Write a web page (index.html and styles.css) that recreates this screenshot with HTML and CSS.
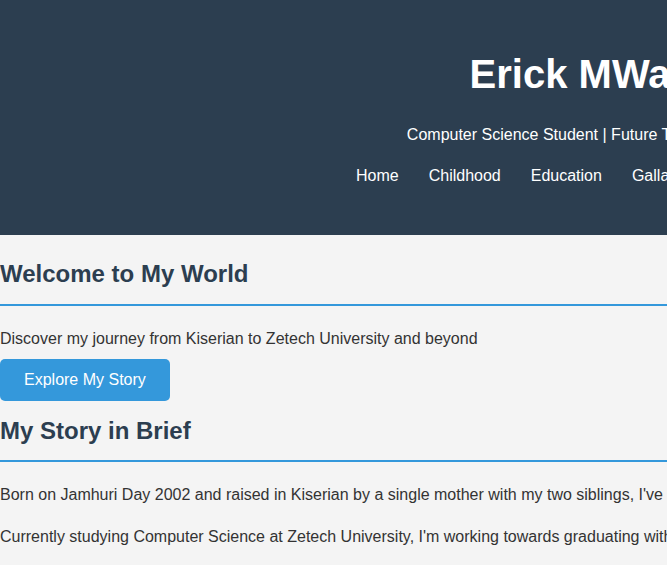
FILE: index.html
```html
<!DOCTYPE html>
<html lang="en">
<head>
<meta charset="utf-8">
<title>Erick MWangi</title>
<link rel="stylesheet" href="styles.css">
</head>
<body>
<div class="page">
  <header class="site-header">
    <h1 class="site-title">Erick MWangi</h1>
    <p class="tagline">Computer Science Student | Future Tech Entrepreneur</p>
    <nav class="site-nav">
      <a href="#">Home</a>
      <a href="#">Childhood</a>
      <a href="#">Education</a>
      <a href="#">Gallary</a>
      <a href="#">Future</a>
      <a href="#">Contact</a>
    </nav>
  </header>
  <main class="content">
    <section class="intro">
      <h2 class="section-title">Welcome to My World</h2>
      <p class="intro-text">Discover my journey from Kiserian to Zetech University and beyond</p>
      <a class="btn" href="#">Explore My Story</a>
    </section>
    <section class="brief">
      <h2 class="section-title">My Story in Brief</h2>
      <p>Born on Jamhuri Day 2002 and raised in Kiserian by a single mother with my two siblings, I've learned the value of resilience, hard work and family.</p>
      <p>Currently studying Computer Science at Zetech University, I'm working towards graduating with honours and building a career in technology.</p>
    </section>
  </main>
</div>
</body>
</html>
```
FILE: styles.css
```css
html, body {
  margin: 0;
  padding: 0;
}
body {
  background: #f4f4f4;
  color: #333333;
  font-family: "Liberation Sans", Arial, sans-serif;
  font-size: 16px;
  line-height: 1.6;
}
.page {
  width: 1200px;
}
.site-header {
  background: #2c3e50;
  color: #ffffff;
  text-align: center;
  padding: 42px 0 47px;
}
.site-title {
  margin: 0 0 16px;
  font-size: 40px;
  font-weight: bold;
}
.tagline {
  margin: 0 0 15px;
}
.site-nav {
  display: flex;
  justify-content: center;
  gap: 30px;
}
.site-nav a {
  color: #ffffff;
  text-decoration: none;
}
.content {
  padding-top: 20px;
}
.section-title {
  margin: 0 0 20px;
  font-size: 24px;
  color: #2c3e50;
  padding-bottom: 10px;
  border-bottom: 2px solid #3498db;
}
.intro {
  margin-bottom: 11px;
}
.intro-text {
  margin: 0 0 8px;
}
.btn {
  display: inline-block;
  vertical-align: top;
  background: #3498db;
  color: #ffffff;
  text-decoration: none;
  padding: 8px 24px;
  border-radius: 5px;
}
.brief p {
  margin: 0 0 16px;
}
```
